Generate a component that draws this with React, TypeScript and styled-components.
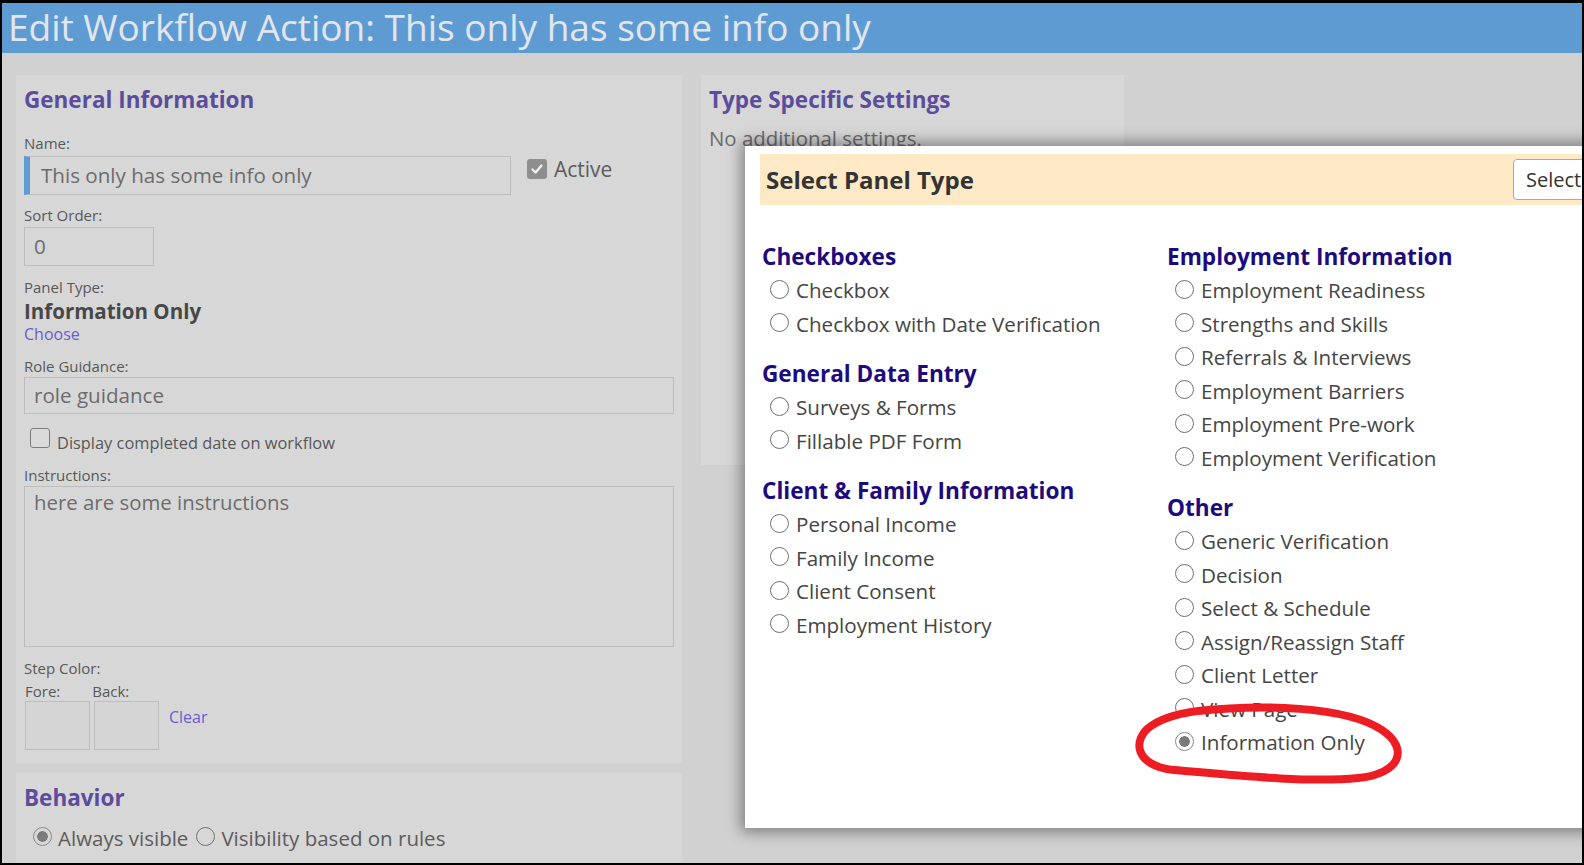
import React from "react";
import styled, { createGlobalStyle } from "styled-components";

const GlobalStyle = createGlobalStyle`
  html, body {
    margin: 0;
    padding: 0;
    background: #000;
  }
  body {
    font-family: "Open Sans", "Noto Sans", sans-serif;
  }
`;

const leftGroups = [
  { title: "Checkboxes", items: ["Checkbox", "Checkbox with Date Verification"] },
  { title: "General Data Entry", items: ["Surveys & Forms", "Fillable PDF Form"] },
  {
    title: "Client & Family Information",
    items: ["Personal Income", "Family Income", "Client Consent", "Employment History"],
  },
];

const rightGroups = [
  {
    title: "Employment Information",
    items: [
      "Employment Readiness",
      "Strengths and Skills",
      "Referrals & Interviews",
      "Employment Barriers",
      "Employment Pre-work",
      "Employment Verification",
    ],
  },
  {
    title: "Other",
    items: [
      "Generic Verification",
      "Decision",
      "Select & Schedule",
      "Assign/Reassign Staff",
      "Client Letter",
      "View Page",
      "Information Only",
    ],
  },
];

function App() {
  const renderGroups = (groups: { title: string; items: string[] }[]) =>
    groups.map((g) => (
      <Group key={g.title}>
        <GroupTitle>{g.title}</GroupTitle>
        {g.items.map((item) => (
          <Option key={item}>
            <Radio $on={item === "Information Only"} />
            {item}
          </Option>
        ))}
      </Group>
    ));

  return (
    <Frame>
      <GlobalStyle />
      <Header>Edit Workflow Action: This only has some info only</Header>
      <Body>
        <Column>
          <Panel $pb={13}>
            <PanelTitle>General Information</PanelTitle>
            <Label $mt={19}>Name:</Label>
            <NameRow>
              <Input $w={487} $accent>
                This only has some info only
              </Input>
              <CheckLabel>
                <CheckBox $on>
                  <svg width="14" height="14" viewBox="0 0 14 14">
                    <path
                      d="M2.5 7.5 L5.6 10.5 L11.5 3.5"
                      fill="none"
                      stroke="#f2f2f2"
                      strokeWidth="2.2"
                      strokeLinecap="round"
                      strokeLinejoin="round"
                    />
                  </svg>
                </CheckBox>
                Active
              </CheckLabel>
            </NameRow>
            <Label $mt={11}>Sort Order:</Label>
            <Input $w={130} $mt={3}>
              0
            </Input>
            <Label $mt={12}>Panel Type:</Label>
            <TypeName>Information Only</TypeName>
            <Link>Choose</Link>
            <Label $mt={13}>Role Guidance:</Label>
            <Input $w={650} $h={37}>
              role guidance
            </Input>
            <SmallCheckRow>
              <CheckBox />
              <span>Display completed date on workflow</span>
            </SmallCheckRow>
            <Label $mt={13}>Instructions:</Label>
            <TextArea>here are some instructions</TextArea>
            <Label $mt={12}>Step Color:</Label>
            <SwatchLabels>
              <span>Fore:</span>
              <span>Back:</span>
            </SwatchLabels>
            <SwatchRow>
              <Swatch />
              <Swatch />
              <Link $ml={6} $mt={6}>
                Clear
              </Link>
            </SwatchRow>
          </Panel>
          <Panel $pb={20}>
            <PanelTitle>Behavior</PanelTitle>
            <BehaviorRow>
              <Radio $on $dim />
              <span>Always visible</span>
              <Radio $dim />
              <span>Visibility based on rules</span>
            </BehaviorRow>
          </Panel>
        </Column>
        <Panel $h={390}>
          <PanelTitle>Type Specific Settings</PanelTitle>
          <Muted>No additional settings.</Muted>
        </Panel>
      </Body>

      <Modal>
        <Band>
          <BandTitle>Select Panel Type</BandTitle>
          <SelectButton>Select</SelectButton>
        </Band>
        <ModalBody>
          <div>{renderGroups(leftGroups)}</div>
          <div>{renderGroups(rightGroups)}</div>
        </ModalBody>
      </Modal>

      <Marker width="300" height="100" viewBox="0 0 300 100">
        <path
          d="M78 16 C140 9, 226 11, 262 35 C290 54, 280 79, 238 83 C188 88, 112 80, 54 75 C14 71, 12 44, 31 31 C47 20, 72 15, 104 14"
          fill="none"
          stroke="#ee1d23"
          strokeWidth="8"
          strokeLinecap="round"
          strokeLinejoin="round"
        />
      </Marker>
    </Frame>
  );
}

export default App;

const Frame = styled.div`
  position: relative;
  width: 1584px;
  height: 865px;
  box-sizing: border-box;
  border: solid #000;
  border-width: 3px 2px 2px 2px;
  overflow: hidden;
  background: #d1d1d1;
`;

const Header = styled.header`
  height: 50px;
  padding-left: 6px;
  background: #5f9bd3;
  color: #e1e6ec;
  font-size: 37px;
  line-height: 48px;
  white-space: nowrap;
`;

const Body = styled.div`
  display: grid;
  grid-template-columns: 666px 423px;
  column-gap: 19px;
  align-items: start;
  padding: 22px 14px 0;
`;

const Column = styled.div`
  display: flex;
  flex-direction: column;
  gap: 10px;
`;

const Panel = styled.section<{ $pb?: number; $h?: number }>`
  display: flex;
  flex-direction: column;
  align-items: flex-start;
  box-sizing: border-box;
  padding: 10px 8px ${(p) => p.$pb ?? 0}px;
  height: ${(p) => (p.$h ? `${p.$h}px` : "auto")};
  background: #d7d7d7;
`;

const PanelTitle = styled.h2`
  margin: 0;
  font-size: 22.5px;
  line-height: 30px;
  font-weight: 700;
  color: #5b4d9c;
`;

const Label = styled.div<{ $mt?: number }>`
  margin-top: ${(p) => p.$mt ?? 0}px;
  font-size: 15px;
  line-height: 18px;
  color: #585858;
`;

const NameRow = styled.div`
  display: flex;
  align-items: flex-start;
  gap: 16px;
  margin-top: 2px;
`;

const Input = styled.div<{ $w: number; $h?: number; $mt?: number; $accent?: boolean }>`
  box-sizing: border-box;
  width: ${(p) => p.$w}px;
  height: ${(p) => p.$h ?? 39}px;
  margin-top: ${(p) => p.$mt ?? 2}px;
  padding-left: ${(p) => (p.$accent ? 11 : 9)}px;
  border: 1px solid #bdbdbd;
  border-left: ${(p) => (p.$accent ? "6px solid #5f9bd3" : "1px solid #bdbdbd")};
  background: #d7d7d7;
  color: #6c6c6c;
  font-size: 20.6px;
  line-height: ${(p) => (p.$h ?? 39) - 2}px;
  white-space: nowrap;
`;

const CheckLabel = styled.label`
  display: flex;
  align-items: center;
  gap: 7px;
  margin-top: 3px;
  font-size: 21px;
  line-height: 24px;
  color: #5c5c5c;
`;

const CheckBox = styled.span<{ $on?: boolean }>`
  display: inline-flex;
  align-items: center;
  justify-content: center;
  box-sizing: border-box;
  width: 20px;
  height: 20px;
  border-radius: 3px;
  border: ${(p) => (p.$on ? "none" : "1.5px solid #7c7c7c")};
  background: ${(p) => (p.$on ? "#8e8e8e" : "#dadada")};
  flex: none;
`;

const TypeName = styled.div`
  margin-top: 2px;
  font-size: 20.5px;
  line-height: 26px;
  font-weight: 700;
  color: #474747;
`;

const Link = styled.span<{ $ml?: number; $mt?: number }>`
  margin-left: ${(p) => p.$ml ?? 0}px;
  margin-top: ${(p) => p.$mt ?? 0}px;
  font-size: 16px;
  line-height: 20px;
  color: #6a5ecf;
`;

const SmallCheckRow = styled.div`
  display: flex;
  align-items: flex-start;
  gap: 7px;
  margin: 14px 0 0 6px;
  font-size: 16.4px;
  line-height: 20px;
  color: #585858;

  & > span:last-child {
    margin-top: 5px;
  }
`;

const TextArea = styled.div`
  box-sizing: border-box;
  width: 650px;
  height: 161px;
  margin-top: 2px;
  padding: 2px 9px;
  border: 1px solid #bdbdbd;
  color: #6c6c6c;
  font-size: 20.4px;
  line-height: 26px;
`;

const SwatchLabels = styled.div`
  display: flex;
  gap: 32px;
  margin: 5px 0 0 1px;
  font-size: 15px;
  line-height: 18px;
  color: #585858;
`;

const SwatchRow = styled.div`
  display: flex;
  align-items: flex-start;
  gap: 4px;
  margin: 1px 0 0 1px;
`;

const Swatch = styled.div`
  box-sizing: border-box;
  width: 65px;
  height: 49px;
  border: 1px solid #bdbdbd;
  background: #d5d5d5;
`;

const BehaviorRow = styled.div`
  display: flex;
  align-items: center;
  gap: 6px;
  margin: 13px 0 0 9px;
  font-size: 20.5px;
  line-height: 24px;
  color: #5c5c5c;

  & > span:nth-child(3) {
    margin-left: 2px;
  }
`;

const Muted = styled.div`
  margin-top: 11px;
  font-size: 20.4px;
  line-height: 24px;
  color: #6c6c6c;
`;

const Modal = styled.div`
  position: absolute;
  left: 743px;
  top: 143px;
  width: 900px;
  height: 682px;
  background: #fff;
  box-shadow: 0 0 14px 4px rgba(0, 0, 0, 0.4);
`;

const Band = styled.div`
  display: flex;
  align-items: center;
  height: 51px;
  margin: 8px 0 0 15px;
  background: #fde9c6;
`;

const BandTitle = styled.div`
  flex: 0 0 747px;
  padding-left: 6px;
  font-size: 24px;
  font-weight: 700;
  color: #333;
`;

const SelectButton = styled.button`
  height: 41px;
  padding: 0 12px;
  border: 1px solid #a9a9a9;
  border-radius: 4px;
  background: #fff;
  color: #333;
  font-family: inherit;
  font-size: 20px;
`;

const ModalBody = styled.div`
  display: grid;
  grid-template-columns: 405px 405px;
  padding: 35px 0 0 17px;
`;

const Group = styled.div`
  margin-bottom: 16px;
`;

const GroupTitle = styled.div`
  font-size: 22.6px;
  line-height: 34px;
  font-weight: 700;
  color: #1d0a7e;
`;

const Option = styled.div`
  display: flex;
  align-items: center;
  gap: 7px;
  padding-left: 8px;
  font-size: 20.6px;
  line-height: 33.5px;
  color: #454545;
  white-space: nowrap;
`;

const Radio = styled.span<{ $on?: boolean; $dim?: boolean }>`
  box-sizing: border-box;
  flex: none;
  width: 19px;
  height: 19px;
  margin-top: -3px;
  border-radius: 50%;
  border: 1.5px solid ${(p) => (p.$on ? "#8a8a8a" : "#707070")};
  background: ${(p) =>
    p.$on
      ? `radial-gradient(circle, #7b7b7b 0 5px, ${p.$dim ? "#d7d7d7" : "#fff"} 5.6px)`
      : p.$dim
      ? "#d7d7d7"
      : "#fff"};
`;

const Marker = styled.svg`
  position: absolute;
  left: 1118px;
  top: 692px;
  pointer-events: none;
`;
